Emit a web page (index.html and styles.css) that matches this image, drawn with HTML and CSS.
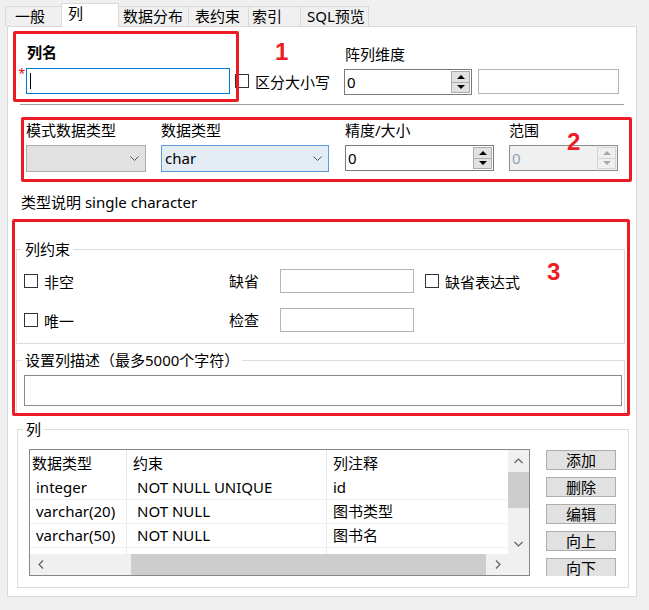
FILE: index.html
```html
<!DOCTYPE html>
<html lang="zh-CN">
<head>
<meta charset="utf-8">
<title>列</title>
<link rel="stylesheet" href="styles.css">
</head>
<body>
<div class="screen">
  <div class="tabs">
    <div class="tab tab-general">一般</div>
    <div class="tab tab-active tab-col">列</div>
    <div class="tab tab-dist">数据分布</div>
    <div class="tab tab-cons">表约束</div>
    <div class="tab tab-idx">索引</div>
    <div class="tab tab-sql">SQL预览</div>
  </div>

  <div class="panel">
    <div class="name-grid">
      <div class="lbl-name">列名</div>
      <div class="lbl-array">阵列维度</div>
      <div class="req">*</div>
      <div class="input input-focus"><span class="caret"></span></div>
      <div class="check check-case"><span class="box"></span><span>区分大小写</span></div>
      <div class="spin spin-array">
        <span class="spin-val">0</span>
        <span class="spin-btns">
          <span class="spin-btn"><i class="tri-up"></i></span>
          <span class="spin-btn"><i class="tri-down"></i></span>
        </span>
      </div>
      <div class="input input-plain input-array2"></div>
    </div>

    <div class="sep"></div>

    <div class="type-row">
      <div class="field f-schema">
        <div class="flabel">模式数据类型</div>
        <div class="combo combo-dis">
          <span></span>
          <svg class="chev" width="9" height="5" viewBox="0 0 9 5"><polyline points="0.5,0.5 4.5,4.5 8.5,0.5" fill="none" stroke="#555" stroke-width="1"/></svg>
        </div>
      </div>
      <div class="field f-type">
        <div class="flabel">数据类型</div>
        <div class="combo combo-sel">
          <span>char</span>
          <svg class="chev" width="9" height="5" viewBox="0 0 9 5"><polyline points="0.5,0.5 4.5,4.5 8.5,0.5" fill="none" stroke="#555" stroke-width="1"/></svg>
        </div>
      </div>
      <div class="field f-prec">
        <div class="flabel">精度/大小</div>
        <div class="spin">
          <span class="spin-val">0</span>
          <span class="spin-btns">
            <span class="spin-btn"><i class="tri-up"></i></span>
            <span class="spin-btn"><i class="tri-down"></i></span>
          </span>
        </div>
      </div>
      <div class="field f-scale">
        <div class="flabel">范围</div>
        <div class="spin spin-dis">
          <span class="spin-val">0</span>
          <span class="spin-btns">
            <span class="spin-btn"><i class="tri-up"></i></span>
            <span class="spin-btn"><i class="tri-down"></i></span>
          </span>
        </div>
      </div>
    </div>

    <div class="type-desc">类型说明 single character</div>

    <fieldset class="fs fs-cons">
      <legend>列约束</legend>
      <div class="cons-grid">
        <div class="check check-first"><span class="box"></span><span>非空</span></div>
        <div class="clabel">缺省</div>
        <div class="input input-plain"></div>
        <div class="check check-last"><span class="box"></span><span>缺省表达式</span></div>
        <div class="check check-first"><span class="box"></span><span>唯一</span></div>
        <div class="clabel">检查</div>
        <div class="input input-plain"></div>
        <div></div>
      </div>
    </fieldset>

    <fieldset class="fs fs-desc">
      <legend>设置列描述（最多5000个字符）</legend>
      <div class="input input-desc"></div>
    </fieldset>

    <fieldset class="fs fs-cols">
      <legend>列</legend>
      <div class="cols-body">
        <div class="grid-box">
          <div class="gv">
            <div class="gr gh">
              <div class="gc">数据类型</div>
              <div class="gc">约束</div>
              <div class="gc">列注释</div>
            </div>
            <div class="gr">
              <div class="gc">integer</div>
              <div class="gc">NOT NULL UNIQUE</div>
              <div class="gc">id</div>
            </div>
            <div class="gr">
              <div class="gc">varchar(20)</div>
              <div class="gc">NOT NULL</div>
              <div class="gc">图书类型</div>
            </div>
            <div class="gr">
              <div class="gc">varchar(50)</div>
              <div class="gc">NOT NULL</div>
              <div class="gc">图书名</div>
            </div>
            <div class="gr">
              <div class="gc"></div>
              <div class="gc"></div>
              <div class="gc"></div>
            </div>
          </div>
          <div class="vs">
            <div class="arr"><svg width="9" height="6" viewBox="0 0 9 6"><polyline points="0.5,5 4.5,1 8.5,5" fill="none" stroke="#606060" stroke-width="1.2"/></svg></div>
            <div class="vthumb"></div>
            <div class="vfill"></div>
            <div class="arr"><svg width="9" height="6" viewBox="0 0 9 6"><polyline points="0.5,1 4.5,5 8.5,1" fill="none" stroke="#606060" stroke-width="1.2"/></svg></div>
          </div>
          <div class="hs">
            <div class="arr"><svg width="6" height="9" viewBox="0 0 6 9"><polyline points="5,0.5 1,4.5 5,8.5" fill="none" stroke="#606060" stroke-width="1.2"/></svg></div>
            <div class="hthumb"></div>
            <div class="arr arr-end"><svg width="6" height="9" viewBox="0 0 6 9"><polyline points="1,0.5 5,4.5 1,8.5" fill="none" stroke="#606060" stroke-width="1.2"/></svg></div>
          </div>
          <div class="corner"></div>
        </div>
        <div class="btns">
          <div class="btn">添加</div>
          <div class="btn">删除</div>
          <div class="btn">编辑</div>
          <div class="btn">向上</div>
          <div class="btn">向下</div>
        </div>
      </div>
    </fieldset>
  </div>

  <div class="mark mark-box1"></div>
  <div class="mark mark-box2"></div>
  <div class="mark mark-box3"></div>
  <div class="num num1">1</div>
  <div class="num num2">2</div>
  <div class="num num3">3</div>
</div>
</body>
</html>
```
FILE: styles.css
```css
html, body {
  margin: 0;
  padding: 0;
}
body {
  background: #f0f0f0;
  font-family: "Noto Sans", "Noto Sans CJK SC", sans-serif;
  font-size: 15px;
  color: #000;
}
.screen {
  position: relative;
  width: 649px;
  height: 610px;
  overflow: hidden;
}

/* Tabs */
.tabs {
  display: flex;
  align-items: flex-end;
  height: 26px;
  padding-left: 5px;
}
.tab {
  height: 20px;
  box-sizing: border-box;
  border: 1px solid #d9d9d9;
  border-bottom: none;
  background: #f0f0f0;
  line-height: 18px;
  margin-right: -1px;
  padding-left: 6px;
  white-space: nowrap;
}
.tab-general { width: 57px; padding-left: 9px; }
.tab-col { width: 58px; }
.tab-dist { width: 71px; padding-left: 4px; }
.tab-cons { width: 61px; }
.tab-idx { width: 53px; padding-left: 3px; }
.tab-sql { width: 69px; }
.tab-active {
  height: 24px;
  background: #fff;
  margin-bottom: -1px;
  position: relative;
  z-index: 1;
}

/* Panel */
.panel {
  margin-left: 7px;
  width: 630px;
  height: 571px;
  box-sizing: border-box;
  border: 1px solid #d9d9d9;
  background: #fff;
}

/* Name row */
.name-grid {
  display: grid;
  grid-template-columns: 18px 204px 114px 128px 6px 141px;
  grid-template-rows: 41px 26px;
}
.lbl-name {
  grid-column: 2;
  grid-row: 1;
  font-weight: bold;
  line-height: 20px;
  margin-top: 15px;
  padding-left: 1px;
}
.lbl-array {
  grid-column: 4;
  grid-row: 1;
  line-height: 20px;
  margin-top: 17px;
  padding-left: 1px;
}
.req {
  grid-column: 1;
  grid-row: 2;
  color: #e81123;
  font-family: "Liberation Sans", sans-serif;
  font-size: 17px;
  line-height: 14px;
  text-align: right;
  padding-right: 1px;
}
.input {
  box-sizing: border-box;
  background: #fff;
  border: 1px solid #b4b4b4;
}
.input-focus {
  grid-column: 2;
  grid-row: 2;
  border-color: #0078d7;
  display: flex;
  align-items: center;
  padding-left: 3px;
}
.caret {
  width: 1px;
  height: 16px;
  background: #000;
}
.check {
  display: flex;
  align-items: center;
  gap: 6px;
  white-space: nowrap;
}
.box {
  width: 14px;
  height: 14px;
  box-sizing: border-box;
  border: 1px solid #333;
  background: #fff;
  flex: none;
}
.check-case {
  grid-column: 3;
  grid-row: 2;
  padding-left: 5px;
}
.spin-array {
  grid-column: 4;
  grid-row: 2;
  margin-top: 1px;
}
.input-array2 {
  grid-column: 6;
  grid-row: 2;
  margin-top: 1px;
}

/* Spinner */
.spin {
  display: flex;
  box-sizing: border-box;
  height: 26px;
  border: 1px solid #7a7a7a;
  background: #fff;
}
.spin-val {
  flex: 1;
  padding-left: 2px;
  line-height: 24px;
}
.spin-btns {
  display: flex;
  flex-direction: column;
  width: 19px;
  padding: 1px 1px 1px 0;
}
.spin-btn {
  flex: 1;
  display: flex;
  align-items: center;
  justify-content: center;
  background: #e1e1e1;
  border: 1px solid #adadad;
}
.spin-btn + .spin-btn {
  border-top: none;
}
.tri-up {
  width: 0;
  height: 0;
  border-left: 4px solid transparent;
  border-right: 4px solid transparent;
  border-bottom: 4px solid #000;
}
.tri-down {
  width: 0;
  height: 0;
  border-left: 4px solid transparent;
  border-right: 4px solid transparent;
  border-top: 4px solid #000;
}
.spin-dis {
  background: #f0f0f0;
  border-color: #8c8c8c;
}
.spin-dis .spin-val {
  color: #8fa3b8;
}
.spin-dis .spin-btn {
  background: #f0f0f0;
  border-color: #d4d4d4;
}
.spin-dis .tri-up { border-bottom-color: #a8a8a8; }
.spin-dis .tri-down { border-top-color: #a8a8a8; }

.sep {
  margin: 10px 0 0 12px;
  width: 604px;
  height: 1px;
  background: #a0a0a0;
}

/* Type row */
.type-row {
  display: flex;
  margin-top: 15px;
  padding-left: 18px;
}
.field {
  display: flex;
  flex-direction: column;
  gap: 5px;
}
.flabel {
  line-height: 20px;
  white-space: nowrap;
}
.f-schema { width: 120px; margin-right: 15px; }
.f-type { width: 168px; margin-right: 16px; }
.f-prec { width: 149px; margin-right: 15px; }
.f-scale { width: 109px; }
.combo {
  height: 27px;
  box-sizing: border-box;
  display: flex;
  align-items: center;
  justify-content: space-between;
  padding: 0 6px 0 3px;
  line-height: 25px;
}
.combo-dis {
  background: #e1e1e1;
  border: 1px solid #adadad;
}
.combo-sel {
  background: #e3ebf3;
  border: 1px solid #5c9bd6;
}
.chev {
  display: block;
  flex: none;
}

.type-desc {
  margin-top: 20px;
  padding-left: 13px;
  line-height: 20px;
}

/* Fieldsets */
.fs {
  margin: 0;
  padding: 0;
  border: 1px solid #dcdcdc;
  box-sizing: border-box;
  min-inline-size: auto;
}
.fs legend {
  padding: 0 3px;
  margin-left: 5px;
  line-height: 20px;
}
.fs-cons {
  margin: 27px 0 0 8px;
  width: 609px;
  padding: 10px 0 11px;
}
.cons-grid {
  display: grid;
  grid-template-columns: 212px 51px 134px auto;
  grid-template-rows: 24px 24px;
  row-gap: 15px;
  align-items: center;
}
.check-first { padding-left: 7px; }
.check-last { padding-left: 11px; }
.clabel { line-height: 20px; }
.cons-grid .input {
  height: 24px;
}
.fs-desc {
  margin: 6px 0 0 8px;
  width: 609px;
  padding: 5px 0 7px 0;
}
.input-desc {
  margin-left: 7px;
  width: 598px;
  height: 31px;
  border-color: #8a8a8a;
}
.fs-cols {
  margin: 5px 0 0 9px;
  width: 612px;
  padding: 10px 0 11px 0;
}
.cols-body {
  display: flex;
  gap: 16px;
  margin-left: 11px;
}

/* Grid (table) */
.grid-box {
  width: 501px;
  height: 127px;
  box-sizing: border-box;
  border: 1px solid #828790;
  display: grid;
  grid-template-columns: 478px 21px;
  grid-template-rows: 104px 21px;
  background: #fff;
}
.gv {
  overflow: hidden;
}
.gr {
  display: grid;
  grid-template-columns: 96px 200px 182px;
  height: 24px;
  box-sizing: border-box;
  border-bottom: 1px solid #f0f0f0;
}
.gc {
  white-space: nowrap;
  overflow: hidden;
  line-height: 23px;
  padding-left: 6px;
}
.gc + .gc {
  border-left: 1px solid #ececec;
}
.gr .gc:nth-child(2) {
  padding-left: 10px;
}
.gh {
  height: 26px;
  border-bottom: none;
}
.gh .gc {
  line-height: 26px;
}
.gh .gc:first-child { padding-left: 2px; }
.gh .gc:nth-child(2) { padding-left: 6px; }
.gh .gc + .gc { border-left-color: #e3e3e3; }

.vs {
  background: #f0f0f0;
  display: flex;
  flex-direction: column;
}
.arr {
  height: 21px;
  width: 21px;
  flex: none;
  display: flex;
  align-items: center;
  justify-content: center;
}
.vs .arr { width: auto; }
.vthumb {
  height: 36px;
  margin-top: 1px;
  background: #cdcdcd;
}
.vfill { flex: 1; }
.hs {
  background: #f0f0f0;
  display: flex;
}
.hthumb {
  margin-left: 80px;
  width: 355px;
  background: #cdcdcd;
}
.arr-end { margin-left: auto; }
.corner { background: #f0f0f0; }

.btns {
  width: 70px;
  height: 126px;
  margin-top: 1px;
  overflow: hidden;
  display: flex;
  flex-direction: column;
  gap: 7px;
}
.btn {
  height: 20px;
  flex: none;
  box-sizing: border-box;
  border: 1px solid #adadad;
  background: #e1e1e1;
  text-align: center;
  line-height: 18px;
}

/* Red annotations overlaid on the screenshot */
.mark {
  position: absolute;
  border: 3px solid #ed1c24;
  border-radius: 2px;
  box-sizing: border-box;
}
.mark-box1 { left: 13px; top: 31px; width: 226px; height: 71px; }
.mark-box2 { left: 21px; top: 117px; width: 611px; height: 65px; }
.mark-box3 { left: 12px; top: 219px; width: 618px; height: 197px; }
.num {
  position: absolute;
  color: #ed1c24;
  font-family: "Liberation Sans", sans-serif;
  font-weight: bold;
  font-size: 24px;
  line-height: 24px;
}
.num1 { left: 275px; top: 40px; }
.num2 { left: 567px; top: 130px; }
.num3 { left: 547px; top: 260px; }
```
